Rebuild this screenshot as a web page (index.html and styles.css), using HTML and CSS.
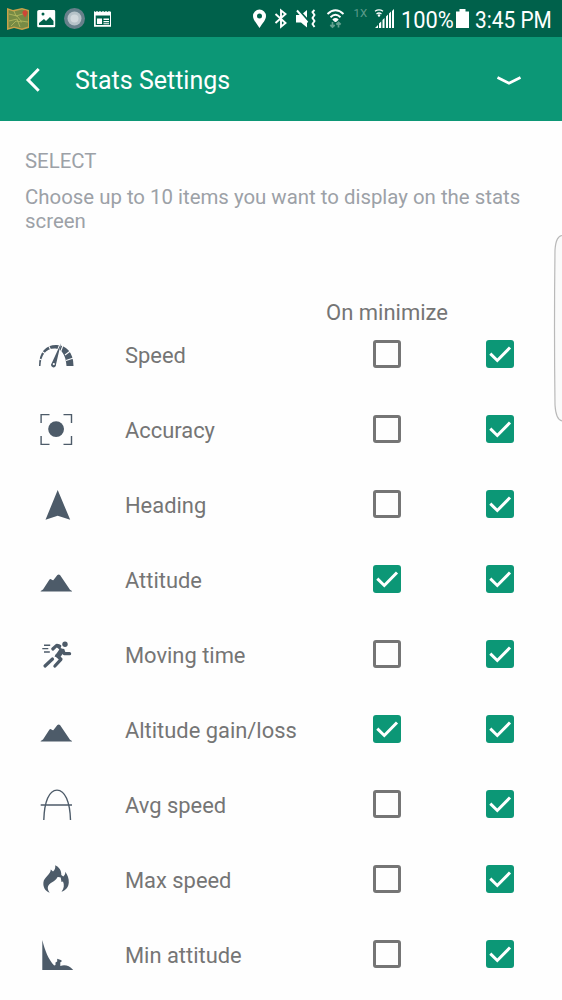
FILE: index.html
```
<!DOCTYPE html>
<html lang="en">
<head>
<meta charset="utf-8">
<title>Stats Settings</title>
<link rel="stylesheet" href="styles.css">
</head>
<body>
<svg class="defs" width="0" height="0">
  <symbol id="speed" viewBox="0 0 40 40">
    <path fill-rule="evenodd" d="M3 31C3 17 10 10 20 10S37.500 17 37.500 31H30.500C30 21 26 14 19.500 13.500C10 13 5 20 4.500 31Z"/>
    <path class="gap" d="M2 23.500l5 2M5.500 16l4 3M12 9.500l3 6M27.500 9l-3 8M37 14l-8 6M39 22.500l-9 3"/>
    <path class="gap" d="M24.700 7l-8.500 22h4z"/>
    <path d="M24.900 8.300L20 29.500A2.500 2.500 0 1 1 15.700 28.200Z"/>
    <circle class="hole" cx="17.800" cy="29.100" r="1.100"/>
  </symbol>
  <symbol id="accuracy" viewBox="0 0 40 40"><path class="line" d="M13.500 4.600H5.100V13M27.500 4.600h8V13M5.100 26v8.400h8.400M27.500 34.400h8V26"/><circle cx="20.100" cy="19.100" r="7.900"/></symbol>
  <symbol id="heading" viewBox="0 0 40 40"><path d="M21.700 5L34.200 34.800L21.700 30.700L9.500 34.800Z"/></symbol>
  <symbol id="mountain" viewBox="0 0 40 40"><path d="M4.700 31.500V31L7 29.500L13.500 19.500Q14.700 18.200 16 20L17.300 20.200L21.400 15Q22.700 13.800 24 15L34 29.800L36 31V31.500Z"/></symbol>
  <symbol id="runner" viewBox="0 0 40 40">
    <circle cx="29" cy="9.200" r="2.700"/>
    <path class="limb" d="M16.800 14L20.700 10.300L23.500 11M27 15.500L28.300 18.700H33.600M20.800 20.500L25 24.300L18.900 31M16.500 24L9 31"/>
    <path d="M21.500 9L25.500 10.700L24.500 13L28.500 14.500L27.500 18L23.500 23L18.500 21.500L23.300 14.500L20 11.500Z"/>
    <path class="line" d="M8 10.200h6.200M6.300 13.600h6M8 17h5.800"/>
  </symbol>
  <symbol id="arch" viewBox="0 0 40 40"><path class="line" d="M4.700 20H36M7.800 35C8.300 17 13 5.100 21 5.100S34 17 34.500 35"/></symbol>
  <symbol id="flame" viewBox="0 0 40 40"><path d="M13.700 32.800C9 31 7 27 7.400 22.500C8 17 14.500 15 14.800 9.500L17 11.500C19 10 19.500 8 19.200 5.300C23 7 25.500 10.500 25.300 15L27.300 16.500C29 15 29.500 13.500 29.300 11.800C31.500 15 33 18.500 32.800 22.500C32.500 27.500 29.500 30.500 25.500 31.700C28 28.500 28.500 25 27 21.500L25.500 22L24.700 17.500L22.500 17L21.300 17.300C20 21.500 12 23 11.800 27.500C11.700 29.500 12.500 31.300 13.700 32.800Z"/></symbol>
  <symbol id="valley" viewBox="0 0 40 40"><path d="M6.300 5C9 16 12.500 24.500 18.200 30.500L19.500 30V27.500L21.200 26.500V23.700L25.500 25.300V26.700L24.300 27.200V31C29 29.500 33 30.500 37.200 35H6.300Z"/></symbol>
  <symbol id="tick" viewBox="0 0 28 28"><path class="tick" d="M4.300 13.700L11.300 20.500L24 7.500"/></symbol>
</svg>
<header class="status">
  <svg class="left-icons" viewBox="0 0 120 37">
    <path fill="#c9a24a" d="M7 8l6 2 9-2 7 2v18l-7 2-8-2-7 2z"/><path fill="#778b45" d="M8.500 10l5 1.500 8.500-2 6 2v15l-6 2-8-2-5.500 1.500z"/>
    <path fill="none" stroke="#b9bd61" stroke-width=".8" d="M9 14l8 2 4 5 7 1M9 21l8-2 3 8M14 11l2 5 10-3M11 26l5-5 6 1"/>
    <path fill="#cf4736" d="M25 17.500l-2.300-3.500a2.600 2.600 0 1 1 4.600 0z"/>
    <path fill="#fff" fill-rule="evenodd" d="M39 10h15q1.200 0 1.200 1.200v15q0 1-1.200 1H38.500q-1.300 0-1.300-1.200V11.500Q37.200 10 39 10zM39 25h14.500v-4l-3.500-4-4 4-2-2-5 4zM41.500 14a1.500 1.500 0 1 0 3 0a1.500 1.500 0 1 0-3 0z"/>
    <circle cx="74.500" cy="18.500" r="10.500" fill="#67808b"/><circle cx="74.500" cy="18.500" r="7" fill="#b6c2c8"/><circle cx="74.500" cy="18.500" r="4" fill="#d1d8dc"/>
    <path fill="#fff" fill-rule="evenodd" d="M94 11l1.500 1 1.500-1 1.500 1 1.500-1 1.500 1 1.500-1 1.500 1 1.500-1 1.500 1 1.500-1 1.500 1 .500-1v15.700H94zM95.700 15.500v9.500h14.300v-9.500z"/><path fill="#fff" d="M97 18.500h5v5.500h-5zM103.500 18.500h5.500V20h-5.500zM103.500 21h5.500v1.200h-5.500zM103.500 23.200h5.500v1h-5.500z"/>
  </svg>
  <svg class="right-icons" viewBox="250 0 150 37">
    <path fill="#fff" fill-rule="evenodd" d="M259.500 28c-3-5-6.500-8-6.500-12a6.500 6.500 0 0 1 13 0c0 4-3.500 7-6.500 12zM257 16a2.500 2.500 0 1 0 5 0a2.500 2.500 0 1 0-5 0z"/>
    <path class="white-line" d="M275.500 14l10 9-4.500 3.700V10.500l4.500 3.500-10 9"/>
    <path fill="#fff" d="M296 15h5l6-5v17.500l-6-5h-5z"/><path fill="none" stroke="#00614b" stroke-width="2" d="M299 10.500l10 11"/><path class="white-line" d="M297 10.500l10.500 12M314.500 10l-2 2 2 3-2 3 2 3-2 3 2 3"/>
    <path class="white-line" d="M327.500 14q8-7.500 16 0M330.500 17.200q5-4.700 10 0M333 20.200q2.500-2.300 5 0"/><circle cx="335.500" cy="20.500" r="1.500" fill="#fff"/>
    <path fill="none" stroke="#63a08f" stroke-width="1.700" d="M332.500 22v5m-2.200-2l2.200 2 2.200-2M338.500 27.500v-5m-2.200 2l2.200-2 2.200 2"/>
    <text x="353.500" y="17.300" class="network">1X</text>
    <path fill="none" stroke="#fff" stroke-width="1.300" d="M375 11.200q4-2.500 8 0M376.500 14q2.500-2 5 0"/><circle cx="379" cy="15.500" r="1.200" fill="#fff"/>
    <path fill="#fff" d="M375 28l3-3v3zM379 28v-4.500l2.200-2V28zM382.500 28v-8l2-2v10zM386 28V16.500l2-2V28zM389 28V13.500l2-2V28zM392 28V11l2-2v19z"/>
  </svg>
  <span class="percent">100%</span>
  <svg class="battery" viewBox="0 0 13 19"><path fill="#fff" d="M0 2.500h3.500V0h6v2.500H13V19H0z"/></svg>
  <span class="clock">3:45 PM</span>
</header>
<nav class="appbar">
  <svg class="back" viewBox="0 0 16 26"><path d="M13.700 2L3 12.900L13.700 23.700"/></svg>
  <h1>Stats Settings</h1>
  <svg class="expand" viewBox="0 0 28 12"><path d="M2.500 2.500L14 8.200L25.500 2.500"/></svg>
</nav>
<main>
  <section class="intro">
    <h2>SELECT</h2>
    <p>Choose up to 10 items you want to display on the stats screen</p>
  </section>
  <div class="column-title">On minimize</div>
  <ul class="items">
    <li><svg class="icon"><use href="#speed"/></svg><span>Speed</span><i class="box"></i><i class="box on"><svg><use href="#tick"/></svg></i></li>
    <li><svg class="icon"><use href="#accuracy"/></svg><span>Accuracy</span><i class="box"></i><i class="box on"><svg><use href="#tick"/></svg></i></li>
    <li><svg class="icon"><use href="#heading"/></svg><span>Heading</span><i class="box"></i><i class="box on"><svg><use href="#tick"/></svg></i></li>
    <li><svg class="icon"><use href="#mountain"/></svg><span>Attitude</span><i class="box on"><svg><use href="#tick"/></svg></i><i class="box on"><svg><use href="#tick"/></svg></i></li>
    <li><svg class="icon"><use href="#runner"/></svg><span>Moving time</span><i class="box"></i><i class="box on"><svg><use href="#tick"/></svg></i></li>
    <li><svg class="icon"><use href="#mountain"/></svg><span>Altitude gain/loss</span><i class="box on"><svg><use href="#tick"/></svg></i><i class="box on"><svg><use href="#tick"/></svg></i></li>
    <li><svg class="icon"><use href="#arch"/></svg><span>Avg speed</span><i class="box"></i><i class="box on"><svg><use href="#tick"/></svg></i></li>
    <li><svg class="icon"><use href="#flame"/></svg><span>Max speed</span><i class="box"></i><i class="box on"><svg><use href="#tick"/></svg></i></li>
    <li><svg class="icon"><use href="#valley"/></svg><span>Min attitude</span><i class="box"></i><i class="box on"><svg><use href="#tick"/></svg></i></li>
  </ul>
</main>
<svg class="edge-handle" viewBox="0 0 10 190"><path d="M11 2.500Q4 2 3 17Q2 95 3 172Q4 188 11 188"/></svg>
</body>
</html>
```
FILE: styles.css
```
* { box-sizing: border-box; }
body { margin: 0; height: 1000px; overflow: hidden; background: #fefefe; font-family: Roboto, sans-serif; color: #757575; }
.defs { position: absolute; }
svg { display: block; flex: none; }
.status { height: 37px; display: flex; background: #00614b; color: #fff; font-size: 24px; line-height: 40px; white-space: nowrap; }
.left-icons { width: 120px; height: 37px; }
.right-icons { width: 150px; height: 37px; margin-left: 130px; }
.network { font-size: 11.5px; fill: #5d9c8b; font-family: Roboto, sans-serif; }
.white-line { fill: none; stroke: #fff; stroke-width: 1.9; }
.percent, .clock { transform-origin: left; transform: scaleX(.87); }
.percent { width: 55px; margin-left: 1px; transform: scaleX(.91); }
.battery { width: 13px; height: 19px; margin-top: 9px; }
.clock { margin-left: 6px; }
.appbar { height: 84px; display: flex; align-items: center; padding: 3px 39px 0 25px; background: #0c9776; color: #fff; }
.back { width: 16px; height: 26px; margin-top: -2px; }
.back path { fill: none; stroke: #fff; stroke-width: 3; }
.appbar h1 { flex: 1; margin: 0 0 0 34px; font-size: 25px; line-height: 30px; font-weight: 400; }
.expand { width: 28px; height: 12px; }
.expand path { fill: none; stroke: #fff; stroke-width: 2.7; }
.intro { height: 179px; padding: 28px 20px 0 25px; color: #9ca1a7; }
.intro h2 { margin: 0; font-size: 20.4px; line-height: 24px; font-weight: 400; }
.intro p { margin: 12px 0 0; font-size: 20.4px; line-height: 24px; }
.column-title { height: 17px; padding-left: 326px; font-size: 22px; line-height: 26px; }
.items { margin: 0; padding: 0; list-style: none; }
.items li { height: 75px; display: grid; grid-template-columns: 89px 248px 112.500px 30px; align-items: center; padding-left: 36px; font-size: 21.900px; line-height: 26px; }
.items span { padding-top: 2px; }
.icon { width: 40px; height: 40px; fill: #4d5b69; }
.line { fill: none; stroke: #4d5b69; stroke-width: 1.4; }
.limb { fill: none; stroke: #4d5b69; stroke-width: 3.2; stroke-linecap: round; stroke-linejoin: round; }
.gap { fill: #fefefe; stroke: #fefefe; stroke-width: 1.1; }
.hole { fill: #fefefe; }
.box { width: 28px; height: 28px; margin-bottom: 2px; border: 3px solid #757575; border-radius: 3px; }
.box.on { border: 0; background: #0c9776; }
.box svg { width: 28px; height: 28px; }
.tick { fill: none; stroke: #fff; stroke-width: 3; }
.edge-handle { position: absolute; top: 233px; right: 0; width: 10px; height: 190px; }
.edge-handle path { fill: #fafafa; stroke: #b9b9b9; stroke-width: 1.2; }
```
